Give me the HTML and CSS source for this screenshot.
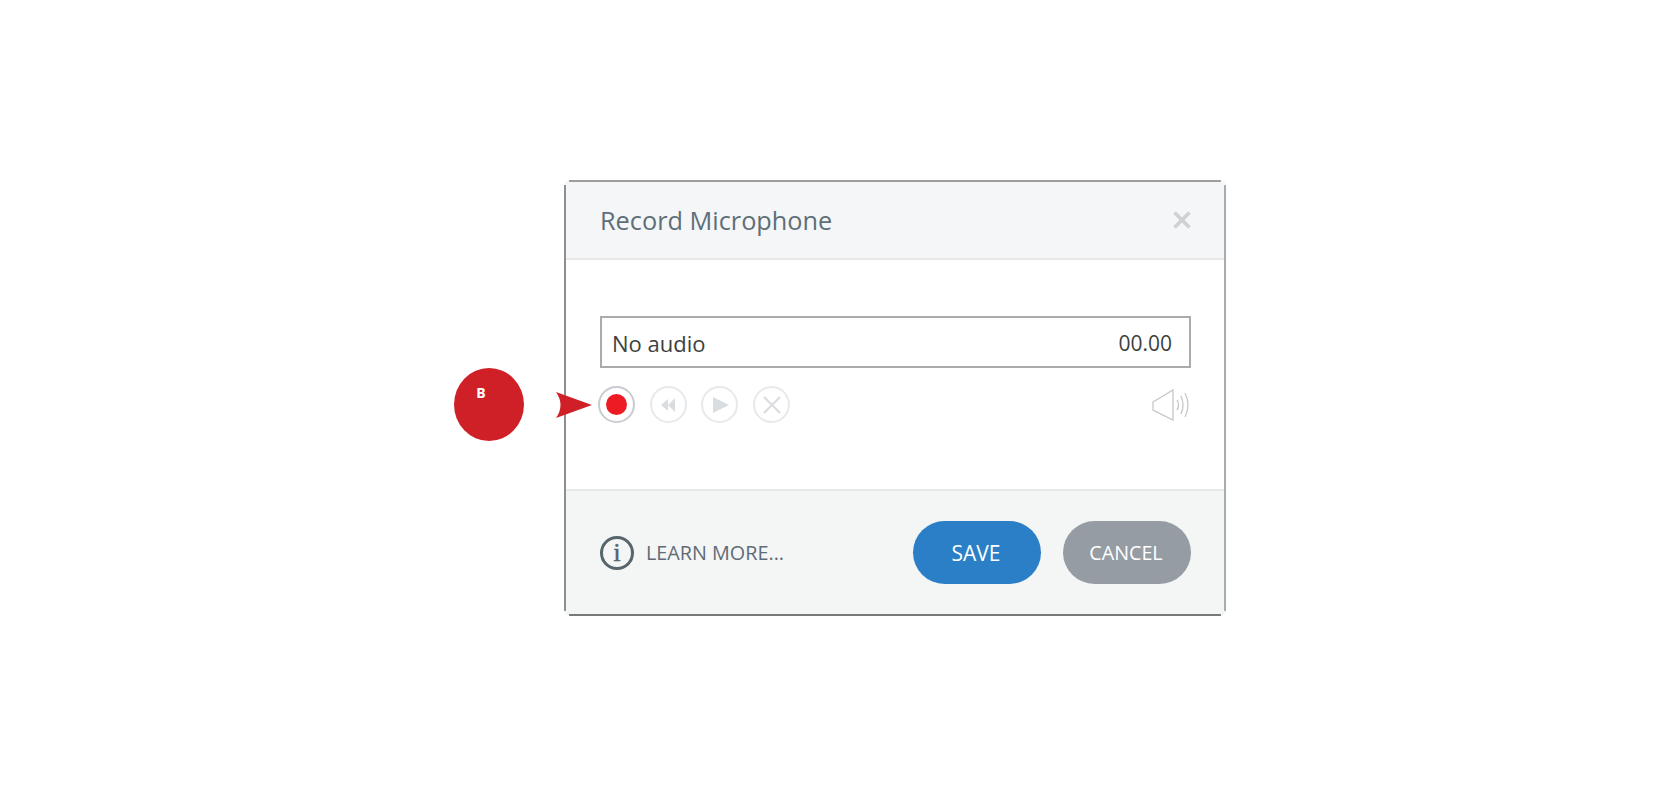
FILE: index.html
```html
<!DOCTYPE html>
<html>
<head>
  <title>Record Microphone</title>
  <link rel="stylesheet" href="styles.css">
</head>
<body>
  <div class="stage">
    <div class="callout">B</div>
    <svg class="pointer" width="36" height="26" viewBox="0 0 36 26"><path d="M0 0 L36 13 L0 26 Q9 13 0 0 Z" fill="#cf2027"/></svg>

    <div class="dialog">
      <div class="dialog-header">
        <span class="dialog-title">Record Microphone</span>
        <svg class="close-icon" width="18" height="18" viewBox="0 0 18 18"><path d="M1.5 1.5 L16.5 16.5 M16.5 1.5 L1.5 16.5" stroke="#cfd1d3" stroke-width="3.6"/></svg>
      </div>

      <div class="dialog-body">
        <div class="audio-field">
          <span>No audio</span>
          <span class="audio-time">00.00</span>
        </div>
        <div class="controls">
          <div class="round-button active">
            <span class="record-dot"></span>
          </div>
          <div class="round-button">
            <svg width="16" height="14" viewBox="0 0 16 14"><path d="M8 1 L1 7 L8 13 Z M15 0 L15 14 L8 7 Z" fill="#dadde0"/></svg>
          </div>
          <div class="round-button">
            <svg class="play-icon" width="16" height="16" viewBox="0 0 16 16"><path d="M0 0 L16 8 L0 16 Z" fill="#dadde0"/></svg>
          </div>
          <div class="round-button">
            <svg width="18" height="18" viewBox="0 0 18 18"><path d="M1 1 L17 17 M17 1 L1 17" stroke="#dadde0" stroke-width="2.2"/></svg>
          </div>
          <svg class="volume-icon" width="40" height="32" viewBox="0 0 40 32" fill="none" stroke="#c4c7ca" stroke-width="1.3">
            <path d="M1 13 L21 1 L21 31 L1 21 Z"/>
            <path d="M25 11 Q28 16 25 21"/>
            <path d="M29 7 Q33 16 29 25"/>
            <path d="M33 4 Q39 16 33 28"/>
          </svg>
        </div>
      </div>

      <div class="dialog-footer">
        <a class="learn-more">
          <svg width="36" height="36" viewBox="0 0 36 36"><circle cx="18" cy="18" r="15.5" fill="none" stroke="#56666c" stroke-width="3"/><text x="18" y="26" class="info-letter">i</text></svg>
          LEARN MORE...
        </a>
        <div class="footer-buttons">
          <button class="pill save">SAVE</button>
          <button class="pill cancel">CANCEL</button>
        </div>
      </div>
    </div>
  </div>
</body>
</html>
```

FILE: styles.css
```css
body {
  margin: 0;
  background: #ffffff;
  font-family: "Open Sans", "Noto Sans", sans-serif;
}

.stage {
  position: relative;
  height: 793px;
  padding: 180px 0 0 564px;
  box-sizing: border-box;
  overflow: hidden;
}

.callout {
  position: absolute;
  left: 454px;
  top: 368px;
  width: 70px;
  height: 73px;
  border-radius: 50%;
  background: #cf2027;
  color: #ffffff;
  font-size: 14px;
  font-weight: 700;
  text-align: center;
  line-height: 20px;
  padding: 15px 16px 0 0;
  box-sizing: border-box;
}

.pointer {
  position: absolute;
  left: 556px;
  top: 392px;
  z-index: 1;
}

.dialog {
  position: relative;
  width: 662px;
  height: 436px;
  border-radius: 6px;
  display: flex;
  flex-direction: column;
  background: #ffffff;
  overflow: hidden;
}

/* the outline stops short of the corners */
.dialog::before {
  content: "";
  position: absolute;
  top: 0;
  bottom: 0;
  left: 5px;
  right: 5px;
  border-top: 2px solid #9b9d9f;
  border-bottom: 2px solid #77797b;
}

.dialog::after {
  content: "";
  position: absolute;
  top: 5px;
  bottom: 5px;
  left: 0;
  right: 0;
  border-left: 2px solid #8c8e90;
  border-right: 2px solid #a9abad;
}

.dialog-header {
  height: 80px;
  flex: none;
  box-sizing: border-box;
  background: #f4f6f7;
  border-bottom: 2px solid #e6e8e9;
  display: flex;
  align-items: center;
  justify-content: space-between;
  padding: 2px 35px 0 36px;
}

.dialog-title {
  font-size: 25.3px;
  color: #5f6f77;
}

.dialog-body {
  flex: 1;
  padding: 56px 35px 0 36px;
}

.audio-field {
  height: 52px;
  box-sizing: border-box;
  border: 2px solid #a9abad;
  display: flex;
  align-items: center;
  justify-content: space-between;
  padding: 1px 17px 0 10px;
  font-size: 22px;
  color: #3d3f40;
}

.audio-time {
  font-size: 21px;
}

.controls {
  display: flex;
  align-items: center;
  gap: 14.7px;
  margin: 18px -1px 0 -2px;
}

.round-button {
  width: 37px;
  height: 37px;
  box-sizing: border-box;
  border: 2px solid #e8e9eb;
  border-radius: 50%;
  display: flex;
  align-items: center;
  justify-content: center;
}

.round-button.active {
  border-color: #c9ccd1;
}

.record-dot {
  width: 21px;
  height: 21px;
  border-radius: 50%;
  background: #ed1c24;
}

.play-icon {
  margin-left: 3px;
}

.volume-icon {
  margin-left: auto;
}

.dialog-footer {
  height: 127px;
  flex: none;
  box-sizing: border-box;
  background: #f4f5f5;
  border-top: 2px solid #e6e8e9;
  display: flex;
  align-items: center;
  justify-content: space-between;
  padding: 0 35px 2px;
}

.learn-more {
  display: flex;
  align-items: center;
  gap: 11px;
  font-size: 19.8px;
  color: #5f6b75;
}

.info-letter {
  font-family: "Liberation Serif", serif;
  font-size: 25px;
  fill: #56666c;
  stroke: #56666c;
  stroke-width: 0.6;
  text-anchor: middle;
}

.footer-buttons {
  display: flex;
  gap: 22px;
}

.pill {
  width: 128px;
  height: 63px;
  border: none;
  border-radius: 32px;
  color: #ffffff;
  font-family: inherit;
  font-size: 20px;
  padding: 0 2px 0 0;
}

.save {
  background: #2a7fc6;
  font-size: 21px;
}

.cancel {
  background: #959ca3;
  font-size: 19.7px;
}
```
